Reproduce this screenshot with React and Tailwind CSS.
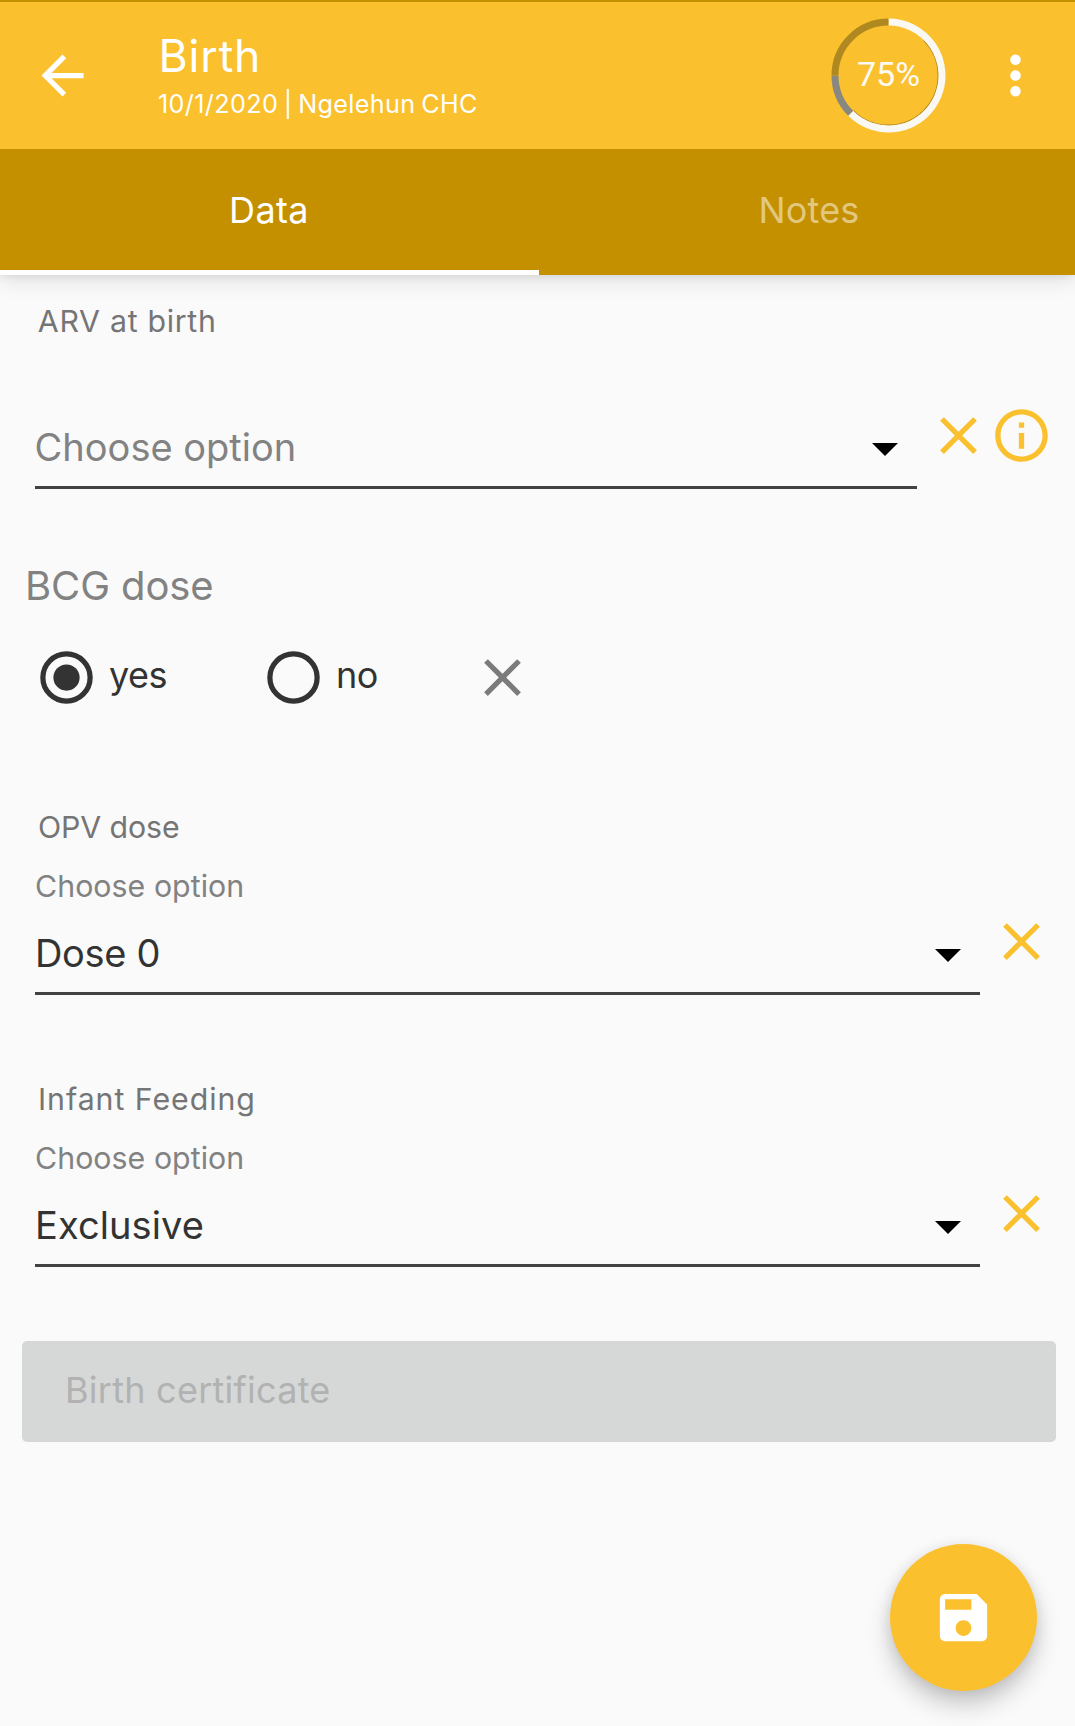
function Icon({ d, className }) {
  return (
    <svg viewBox="0 0 24 24" className={`size-[63px] shrink-0 fill-current ${className || ""}`}>
      <path d={d} />
    </svg>
  );
}

const paths = {
  back: "M20 11H7.83l5.59-5.59L12 4l-8 8 8 8 1.41-1.41L7.83 13H20v-2z",
  more: "M12 8c1.1 0 2-.9 2-2s-.9-2-2-2-2 .9-2 2 .9 2 2 2zm0 2c-1.1 0-2 .9-2 2s.9 2 2 2 2-.9 2-2-.9-2-2-2zm0 6c-1.1 0-2 .9-2 2s.9 2 2 2 2-.9 2-2-.9-2-2-2z",
  close: "M19 6.41L17.59 5 12 10.59 6.41 5 5 6.41 10.59 12 5 17.59 6.41 19 12 13.41 17.59 19 19 17.59 13.41 12z",
  info: "M11 7h2v2h-2zm0 4h2v6h-2zm1-9C6.48 2 2 6.48 2 12s4.48 10 10 10 10-4.48 10-10S17.52 2 12 2zm0 18c-4.41 0-8-3.59-8-8s3.59-8 8-8 8 3.59 8 8-3.59 8-8 8z",
  save: "M17 3H5c-1.11 0-2 .9-2 2v14c0 1.1.89 2 2 2h14c1.1 0 2-.9 2-2V7l-4-4zm-5 16c-1.66 0-3-1.34-3-3s1.34-3 3-3 3 1.34 3 3-1.34 3-3 3zm3-10H5V5h10v4z",
};

function ProgressRing() {
  return (
    <div className="relative ml-auto mt-[16px] flex size-[115px] shrink-0 items-center justify-center">
      <svg viewBox="-57.5 -57.5 115 115" className="absolute inset-0 size-full" fill="none" strokeWidth="7">
        <path d="M35.1 35.1A49.6 49.6 0 0 1 -35.1 35.1" stroke="#b08820" strokeWidth="1.2" />
        <path d="M35.1 35.1A49.6 49.6 0 0 0 35.1 -35.1" stroke="#b08820" strokeWidth="1.2" />
        <path d="M0 -53.5A53.5 53.5 0 1 1 -37.83 37.83" stroke="#faf8f2" />
        <path d="M-37.83 37.83A53.5 53.5 0 0 1 -53.5 0" stroke="#888880" />
        <path d="M-53.5 0A53.5 53.5 0 0 1 0 -53.5" stroke="#b08820" />
      </svg>
      <span className="relative -mt-[4px] font-['Roboto',sans-serif] text-[34px] leading-[40px] text-[#fdfaf2]">75%</span>
    </div>
  );
}

function Header() {
  return (
    <header className="relative z-10 bg-[#fbc02d] text-white shadow-[0_6px_20px_rgba(0,0,0,0.10),0_1px_8px_rgba(0,0,0,0.08)]">
      <div className="h-[2px] bg-[#c49000]" />
      <div className="flex h-[147px] items-start pl-[31px] pr-[28px]">
        <Icon d={paths.back} className="mt-[42px]" />
        <div className="ml-[64px] mt-[28px]">
          <h1 className="pl-[0.6px] text-[44.5px] leading-[52px] tracking-[0.9px]">Birth</h1>
          <p className="mt-[7px] text-[25.2px] leading-[30px] tracking-[0.35px] [word-spacing:-1.8px]">
            10/1/2020 | Ngelehun CHC
          </p>
        </div>
        <ProgressRing />
        <Icon d={paths.more} className="ml-[38px] mt-[42px]" />
      </div>
      <nav className="flex h-[126px] bg-[#c49000] text-center text-[36px] leading-[122px] tracking-[0.4px]">
        <div className="w-[539px] border-b-[5px] border-white pr-[1px]">Data</div>
        <div className="flex-1 pl-[4px] tracking-[0.2px] text-[#e2c77f]">Notes</div>
      </nav>
    </header>
  );
}

function Field({ label, labelClass, hint, children, valueClass, info }) {
  return (
    <section className="pl-[35px] pr-[22px]">
      <div className={`h-[36px] text-[30.3px] leading-[37px] text-[#757575] ${labelClass}`}>{label}</div>
      <div className="flex h-[150px]">
        <div className="flex flex-1 flex-col justify-between border-b-[3px] border-[#424242]">
          <div className="mt-[23px] h-[36px] text-[30.3px] leading-[37px] tracking-[0.05px] text-[#828282]">{hint}</div>
          <div className="flex items-end justify-between">
            <div className={`mb-[16px] text-[38px] leading-[46px] ${valueClass}`}>{children}</div>
            <svg viewBox="0 0 26 13" className="mb-[30px] mr-[18.6px] h-[13px] w-[26px]">
              <path d="M0 0H26L13 13Z" fill="#000" />
            </svg>
          </div>
        </div>
        <div className="ml-[10px] flex pt-[65px] text-[#fbc02d]">
          <Icon d={paths.close} />
          {info && <Icon d={paths.info} />}
        </div>
      </div>
    </section>
  );
}

function Radio({ checked, children, className }) {
  return (
    <div className={`flex h-[63px] items-center text-[#333333] ${className}`}>
      <svg viewBox="0 0 24 24" className="size-[63px] shrink-0">
        <circle cx="12" cy="12" r="9" fill="none" stroke="currentColor" strokeWidth="2" />
        {checked && <circle cx="12" cy="12" r="5" fill="currentColor" />}
      </svg>
      <span className="-mt-[5px] ml-[10.9px] text-[36px] leading-[44px] tracking-[-0.5px]">{children}</span>
    </div>
  );
}

export default function App() {
  return (
    <div className="relative h-[1726px] w-[1075px] overflow-hidden bg-[#fafafa] font-['Inter',sans-serif]">
      <Header />
      <main className="pt-[28px]">
        <Field
          label="ARV at birth"
          labelClass="pl-[2.8px] tracking-[0.7px]"
          valueClass="-ml-[0.4px] text-[#828282]"
          info
        >
          Choose option
        </Field>
        <section className="mt-[73px] pl-[25px]">
          <div className="h-[48px] text-[40px] leading-[48px] tracking-[-0.1px] text-[#828282]">BCG dose</div>
          <div className="mt-[35.5px] flex pl-[10.2px]">
            <Radio checked className="w-[227px]">yes</Radio>
            <Radio className="w-[208.6px]">no</Radio>
            <Icon d={paths.close} className="text-[#7b7b7b]" />
          </div>
        </section>
        <div className="mt-[100.5px] flex flex-col gap-[86px]">
          <Field
            label="OPV dose"
            labelClass="pl-[3px] tracking-[-0.1px]"
            hint="Choose option"
            valueClass="tracking-[-0.3px] text-[#333333]"
          >
            Dose 0
          </Field>
          <Field
            label="Infant Feeding"
            labelClass="pl-[3px] tracking-[0.95px]"
            hint="Choose option"
            valueClass="tracking-[0.1px] text-[#333333]"
          >
            Exclusive
          </Field>
        </div>
        <div className="ml-[22px] mt-[74px] h-[101px] w-[1034px] rounded-[5px] bg-[#d6d8d7] pl-[43px] text-[36px] leading-[98px] tracking-[0.25px] text-[#b1b2b1]">
          Birth certificate
        </div>
      </main>
      <button className="absolute bottom-[35px] right-[38px] flex size-[147px] items-center justify-center rounded-full bg-[#fbc02d] text-white shadow-[0_14px_24px_rgba(0,0,0,0.20),0_2px_14px_rgba(0,0,0,0.09)]">
        <Icon d={paths.save} />
      </button>
    </div>
  );
}
